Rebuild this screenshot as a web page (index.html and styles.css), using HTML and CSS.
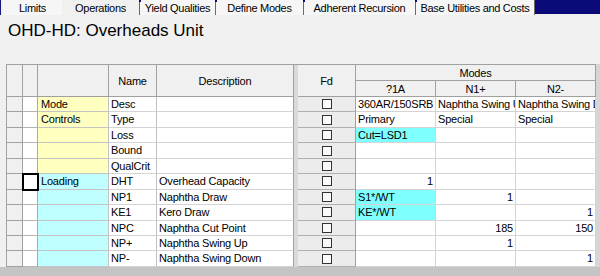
FILE: index.html
```html
<!DOCTYPE html>
<html lang="en">
<head>
  <meta charset="UTF-8">
  <title>OHD-HD: Overheads Unit</title>
  <link rel="stylesheet" href="styles.css">
</head>
<body>
  <div class="tabs">
    <div class="tab w-limits">Limits</div>
    <div class="tab active w-ops">Operations</div>
    <div class="tab w-yield">Yield Qualities</div>
    <div class="tab w-define">Define Modes</div>
    <div class="tab w-adh">Adherent Recursion</div>
    <div class="tab w-base">Base Utilities and Costs</div>
    <div class="tab-fill"></div>
  </div>

  <div class="title">OHD-HD: Overheads Unit</div>

  <div class="sheet">
    <div class="grid">
      <div class="hd tall"></div>
      <div class="hd tall"></div>
      <div class="hd tall"></div>
      <div class="hd tall">Name</div>
      <div class="hd tall">Description</div>
      <div class="divider"></div>
      <div class="hd tall fd-hd">Fd</div>
      <div class="hd modes">Modes</div>
      <div class="hd">?1A</div>
      <div class="hd">N1+</div>
      <div class="hd">N2-</div>

      <div class="rh"></div><div class="c2"></div><div class="cat yellow">Mode</div><div class="nm">Desc</div><div class="ds"></div><div class="fd"><span class="box"></span></div><div class="m">360AR/150SRB</div><div class="m">Naphtha Swing Up</div><div class="m">Naphtha Swing Down</div>
      <div class="rh"></div><div class="c2"></div><div class="cat yellow">Controls</div><div class="nm">Type</div><div class="ds"></div><div class="fd"><span class="box"></span></div><div class="m">Primary</div><div class="m">Special</div><div class="m">Special</div>
      <div class="rh"></div><div class="c2"></div><div class="cat yellow"></div><div class="nm">Loss</div><div class="ds"></div><div class="fd"><span class="box"></span></div><div class="m aqua">Cut=LSD1</div><div class="m"></div><div class="m"></div>
      <div class="rh"></div><div class="c2"></div><div class="cat yellow"></div><div class="nm">Bound</div><div class="ds"></div><div class="fd"><span class="box"></span></div><div class="m"></div><div class="m"></div><div class="m"></div>
      <div class="rh"></div><div class="c2"></div><div class="cat yellow"></div><div class="nm">QualCrit</div><div class="ds"></div><div class="fd"><span class="box"></span></div><div class="m"></div><div class="m"></div><div class="m"></div>
      <div class="rh"></div><div class="c2 cursor"></div><div class="cat cyan">Loading</div><div class="nm">DHT</div><div class="ds">Overhead Capacity</div><div class="fd"><span class="box"></span></div><div class="m num">1</div><div class="m"></div><div class="m"></div>
      <div class="rh"></div><div class="c2"></div><div class="cat cyan"></div><div class="nm">NP1</div><div class="ds">Naphtha Draw</div><div class="fd"><span class="box"></span></div><div class="m aqua">S1*/WT</div><div class="m num">1</div><div class="m"></div>
      <div class="rh"></div><div class="c2"></div><div class="cat cyan"></div><div class="nm">KE1</div><div class="ds">Kero Draw</div><div class="fd"><span class="box"></span></div><div class="m aqua">KE*/WT</div><div class="m"></div><div class="m num">1</div>
      <div class="rh"></div><div class="c2"></div><div class="cat cyan"></div><div class="nm">NPC</div><div class="ds">Naphtha Cut Point</div><div class="fd"><span class="box"></span></div><div class="m"></div><div class="m num">185</div><div class="m num">150</div>
      <div class="rh"></div><div class="c2"></div><div class="cat cyan"></div><div class="nm">NP+</div><div class="ds">Naphtha Swing Up</div><div class="fd"><span class="box"></span></div><div class="m"></div><div class="m num">1</div><div class="m"></div>
      <div class="rh"></div><div class="c2"></div><div class="cat cyan"></div><div class="nm">NP-</div><div class="ds">Naphtha Swing Down</div><div class="fd"><span class="box"></span></div><div class="m"></div><div class="m"></div><div class="m num">1</div>
    </div>
    <div class="vscroll"></div>
  </div>
  <div class="hscroll"></div>
</body>
</html>
```

FILE: styles.css
```css
body { margin: 0; height: 276px; overflow: hidden; background: #f0f0f0; color: #000; font-family: "Liberation Sans", Arial, sans-serif; }

.tabs { display: flex; height: 15px; padding-left: 2px; border-left: 1px solid #1a1a7a; font-size: 11px; letter-spacing: -0.3px; }
.tab { position: relative; box-sizing: border-box; height: 15px; padding-top: 1px; line-height: 14px; text-align: center; background: #f6f6f6; border-left: 1px solid #6a6a6a; }
.tab::before { content: ""; position: absolute; left: -1px; top: 0; width: 2px; height: 2px; background: #0a0a78; }
.tab.active { background: #f0f0f0; border-left: none; }
.tab.active::before { display: none; }
.w-limits { width: 59px; border-left: none; }
.w-limits::before { display: none; }
.w-ops { width: 77px; }
.w-yield { width: 76px; }
.w-define { width: 88px; }
.w-adh { width: 112px; }
.w-base { width: 120px; border-right: 1px solid #6a6a6a; }
.tab-fill { flex: 1; height: 14px; background: #0a0a78; }

.title { box-sizing: border-box; height: 49px; padding: 6px 0 0 8px; font-size: 17px; line-height: 20px; }

.sheet { display: flex; height: 203px; }
.grid { display: grid; margin-left: 6px; border-top: 1px solid #a0a0a0; border-left: 1px solid #a0a0a0; grid-template-columns: 16px 15px 71px 48px 137px 4px 58px 80px 80px 80px; grid-template-rows: 16px 16px repeat(11, 15.45px); font-size: 11px; letter-spacing: -0.2px; }
.grid > div { box-sizing: border-box; border-right: 1px solid #d4d4d4; border-bottom: 1px solid #d4d4d4; background: #fff; padding: 0 2px; line-height: 14px; white-space: nowrap; overflow: hidden; }
.vscroll { flex: 1; background: #d6d6d6; }
.hscroll { height: 10px; background: #c4c4c4; }

.grid > .hd { display: flex; align-items: center; justify-content: center; background: #f0f0f0; border-color: #a0a0a0; }
.grid > .tall { grid-row: span 2; }
.grid > .modes { grid-column: span 3; }
.grid > .divider { grid-column: 6; grid-row: 1 / -1; background: #dadada; border-right-color: #a0a0a0; border-bottom: none; }
.grid > .ds, .grid > .hd:nth-child(5) { border-right-color: #a0a0a0; }

.grid > .rh { background: #f0f0f0; border-color: #a0a0a0; }
.grid > .c2 { border-color: #b4b4b4; border-right-color: #a8a8a8; }
.grid > .cat { padding-left: 3px; border-color: #c4c4c4; }
.grid > .nm { border-right-color: #c0c0c0; }
.grid > .yellow { background: #ffffc0; }
.grid > .cyan { background: #c0ffff; }
.grid > .aqua { background: #80ffff; }
.grid > .num { text-align: right; }
.grid > .cursor { position: relative; z-index: 1; outline: 2px solid #000; outline-offset: -1px; }

.grid > .fd { display: flex; align-items: center; justify-content: center; background: #ececec; border-color: #b0b0b0; border-right-color: #a0a0a0; }
.box { display: block; width: 10px; height: 10px; box-sizing: border-box; border: 1px solid #333; background: #fafafa; }
```
